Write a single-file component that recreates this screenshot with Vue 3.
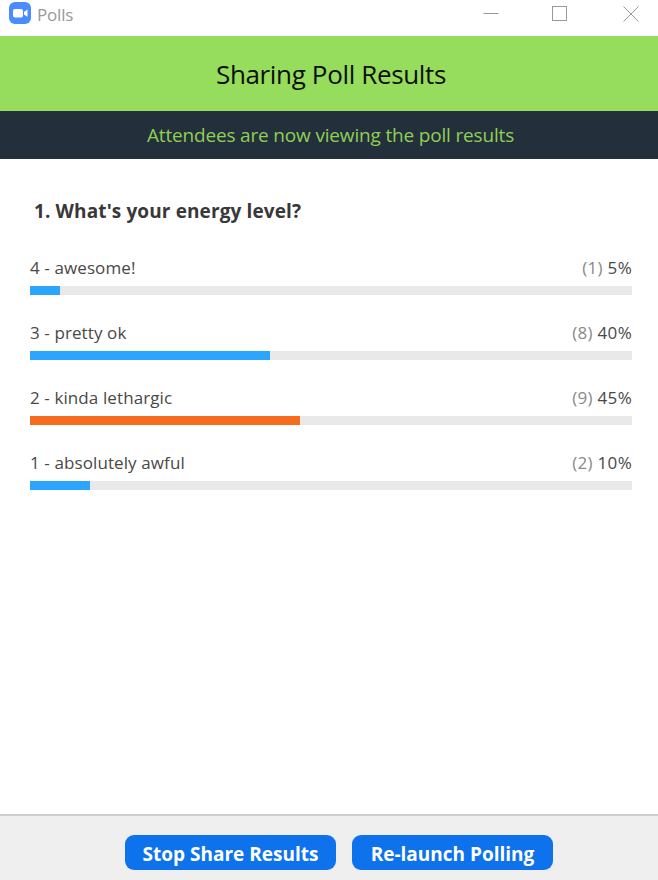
<template>
  <div class="window">
    <div class="titlebar">
      <div class="title-left">
        <svg class="logo" width="22" height="22" viewBox="0 0 22 22">
          <rect width="22" height="22" rx="6" fill="#4a8cff" />
          <rect x="4" y="7" width="10" height="8.5" rx="2" fill="#fff" />
          <path d="M15 10l3.5-2.6v7.4L15 12.4z" fill="#fff" />
        </svg>
        <span class="app-name">Polls</span>
      </div>
      <div class="win-controls">
        <svg class="min" width="16" height="16" viewBox="0 0 16 16"><path d="M0.5 7.5h15" stroke="#999" fill="none" /></svg>
        <svg width="16" height="16" viewBox="0 0 16 16"><rect x="0.5" y="0.5" width="14" height="14" stroke="#999" fill="none" /></svg>
        <svg width="16" height="16" viewBox="0 0 16 16"><path d="M0.5 0.5l15 15M15.5 0.5l-15 15" stroke="#999" fill="none" /></svg>
      </div>
    </div>

    <div class="banner">Sharing Poll Results</div>
    <div class="subbanner">Attendees are now viewing the poll results</div>

    <div class="content">
      <h3 class="question">1. What's your energy level?</h3>
      <div v-for="a in answers" :key="a.label" class="answer">
        <div class="answer-head">
          <span>{{ a.label }}</span>
          <span class="result"><span class="count">({{ a.count }})</span> {{ a.pct }}%</span>
        </div>
        <div class="track">
          <div class="fill" :class="{ top: a.top }" :style="{ width: a.pct * 6 + 'px' }"></div>
        </div>
      </div>
    </div>

    <div class="footer">
      <button class="btn stop">Stop Share Results</button>
      <button class="btn relaunch">Re-launch Polling</button>
    </div>
  </div>
</template>

<script setup>
const answers = [
  { label: '4 - awesome!', count: 1, pct: 5 },
  { label: '3 - pretty ok', count: 8, pct: 40 },
  { label: '2 - kinda lethargic', count: 9, pct: 45, top: true },
  { label: '1 - absolutely awful', count: 2, pct: 10 }
]
</script>

<style>
html, body { margin: 0; background: #fff; }
</style>

<style scoped>
.window {
  width: 658px; height: 880px; display: flex; flex-direction: column;
  font-family: "Open Sans", "Noto Sans", sans-serif; overflow: hidden; background: #fff;
}
.titlebar { height: 36px; display: flex; justify-content: space-between; align-items: flex-start; padding: 2px 19px 0 9px; box-sizing: border-box; }
.title-left { display: flex; align-items: flex-start; gap: 6px; }
.logo { display: block; }
.app-name { font-size: 17px; line-height: 26px; color: #999; letter-spacing: -0.2px; }
.win-controls { display: flex; gap: 55px; margin-top: 4px; }
.win-controls svg { display: block; }
.win-controls .min { margin-right: -2px; }

.banner {
  height: 75px; padding-left: 4px; background: #97dd5d; color: #0b0f0a; font-size: 26px; letter-spacing: -0.35px;
  display: flex; align-items: center; justify-content: center;
}
.subbanner {
  height: 48px; padding-left: 3px; background: #232f3a; color: #8ed056; font-size: 19px; letter-spacing: -0.17px;
  display: flex; align-items: center; justify-content: center;
}

.content { flex: 1; padding: 38px 26px 0 30px; }
.question { margin: 0 0 29px 4px; font-size: 19px; font-weight: 700; line-height: 28px; color: #383838; letter-spacing: 0.12px; }
.answer { margin-bottom: 24px; }
.answer-head { display: flex; justify-content: space-between; height: 32px; line-height: 28px; font-size: 17px; letter-spacing: 0.1px; color: #484848; }
.result { letter-spacing: 0.3px; }
.count { color: #8a8a8a; }
.track { height: 9px; background: #e9e9e9; }
.fill { height: 100%; background: #2ca5ff; }
.fill.top { background: #f76b1c; }

.footer {
  height: 66px; box-sizing: border-box; background: #efefef; border-top: 2px solid #cfcfcf;
  display: flex; justify-content: center; gap: 16px; padding: 19px 0 0 20px;
}
.btn {
  height: 35px; border: 0; border-radius: 9px; background: #0e72ed; color: #fff;
  font-family: inherit; font-size: 19px; font-weight: 700; padding: 2px 0 0;
}
.stop { width: 211px; }
.relaunch { width: 201px; }
</style>
